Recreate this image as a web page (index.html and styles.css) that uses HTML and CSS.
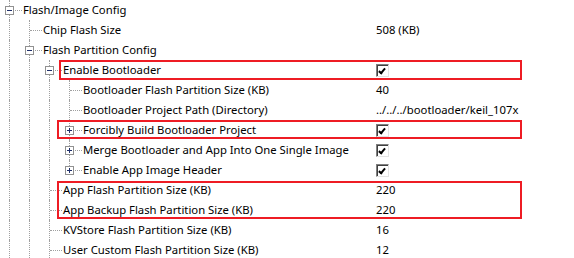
FILE: index.html
```html
<!DOCTYPE html>
<html lang="en">
<head>
  <meta charset="UTF-8">
  <title>Configuration Wizard</title>
  <link rel="stylesheet" href="styles.css">
</head>
<body>
  <div class="wizard">
    <div class="row">
      <div class="tree"><span class="node full"><i class="box minus"></i></span><span class="label">Flash/Image Config</span></div>
      <div class="value"></div>
    </div>
    <div class="row">
      <div class="tree"><span class="g v"></span><span class="node full leaf"></span><span class="label">Chip Flash Size</span></div>
      <div class="value">508 (KB)</div>
    </div>
    <div class="row">
      <div class="tree"><span class="g v"></span><span class="node full"><i class="box minus"></i></span><span class="label">Flash Partition Config</span></div>
      <div class="value"></div>
    </div>
    <div class="row">
      <div class="tree"><span class="g v"></span><span class="g v"></span><span class="node full"><i class="box minus"></i></span><span class="label">Enable Bootloader</span></div>
      <div class="value"><span class="check"></span></div>
    </div>
    <div class="row">
      <div class="tree"><span class="g v"></span><span class="g v"></span><span class="g v"></span><span class="node full leaf"></span><span class="label">Bootloader Flash Partition Size (KB)</span></div>
      <div class="value">40</div>
    </div>
    <div class="row">
      <div class="tree"><span class="g v"></span><span class="g v"></span><span class="g v"></span><span class="node full leaf"></span><span class="label">Bootloader Project Path (Directory)</span></div>
      <div class="value">../../../bootloader/keil_107x</div>
    </div>
    <div class="row">
      <div class="tree"><span class="g v"></span><span class="g v"></span><span class="g v"></span><span class="node full"><i class="box plus"></i></span><span class="label">Forcibly Build Bootloader Project</span></div>
      <div class="value"><span class="check"></span></div>
    </div>
    <div class="row">
      <div class="tree"><span class="g v"></span><span class="g v"></span><span class="g v"></span><span class="node full"><i class="box plus"></i></span><span class="label">Merge Bootloader and App Into One Single Image</span></div>
      <div class="value"><span class="check"></span></div>
    </div>
    <div class="row">
      <div class="tree"><span class="g v"></span><span class="g v"></span><span class="g v"></span><span class="node last"><i class="box plus"></i></span><span class="label">Enable App Image Header</span></div>
      <div class="value"><span class="check"></span></div>
    </div>
    <div class="row">
      <div class="tree"><span class="g v"></span><span class="g v"></span><span class="node full leaf"></span><span class="label">App Flash Partition Size (KB)</span></div>
      <div class="value">220</div>
    </div>
    <div class="row">
      <div class="tree"><span class="g v"></span><span class="g v"></span><span class="node full leaf"></span><span class="label">App Backup Flash Partition Size (KB)</span></div>
      <div class="value">220</div>
    </div>
    <div class="row">
      <div class="tree"><span class="g v"></span><span class="g v"></span><span class="node full leaf"></span><span class="label">KVStore Flash Partition Size (KB)</span></div>
      <div class="value">16</div>
    </div>
    <div class="row">
      <div class="tree"><span class="g v"></span><span class="g v"></span><span class="node full leaf"></span><span class="label">User Custom Flash Partition Size (KB)</span></div>
      <div class="value">12</div>
    </div>

    <!-- highlight marks drawn over the tree -->
    <div class="mark mark-boot"></div>
    <div class="mark mark-force"></div>
    <div class="mark mark-app"></div>
  </div>
</body>
</html>
```

FILE: styles.css
```css
body {
  margin: 0;
  background-color: #fff;
  font-family: "Noto Sans", sans-serif;
  font-size: 11.3px;
  color: #000;
}

.wizard {
  position: relative;
  width: 574px;
  height: 258px;
  overflow: hidden;
}

.row {
  display: flex;
  height: 20px;
  line-height: 20px;
}

.tree {
  display: flex;
  width: 376px;
  flex-shrink: 0;
  white-space: nowrap;
}

.value {
  display: flex;
  align-items: center;
  white-space: nowrap;
}

/* tree guide lines */
.g,
.node {
  position: relative;
  width: 20px;
  height: 20px;
  flex-shrink: 0;
}

.g.v::before,
.node.full::before,
.node.last::before {
  content: "";
  position: absolute;
  left: 9px;
  top: 0;
  height: 20px;
  border-left: 1px dotted #a0a0a0;
}

.node.last::before {
  height: 10px;
}

.node::after {
  content: "";
  position: absolute;
  left: 10px;
  top: 10px;
  width: 12px;
  border-top: 1px dotted #a0a0a0;
}

.box {
  position: absolute;
  left: 5px;
  top: 6px;
  width: 7px;
  height: 7px;
  border: 1px solid #919191;
  background-color: #fff;
  z-index: 1;
}

.box::before {
  content: "";
  position: absolute;
  left: 1px;
  top: 3px;
  width: 5px;
  height: 1px;
  background-color: #1f2f6a;
}

.box.plus::after {
  content: "";
  position: absolute;
  left: 3px;
  top: 1px;
  width: 1px;
  height: 5px;
  background-color: #1f2f6a;
}

.label {
  padding-left: 3px;
}

/* checkbox */
.check {
  position: relative;
  width: 11px;
  height: 11px;
  border: 1px solid;
  border-color: #808080 #e3e3e3 #e3e3e3 #808080;
  box-shadow: inset 1px 1px 0 #404040;
  background-color: #fff;
}

.check::after {
  content: "";
  position: absolute;
  left: 3px;
  top: 2px;
  width: 2px;
  height: 5px;
  border: solid #000;
  border-width: 0 2px 2px 0;
  transform: rotate(40deg);
}

/* red annotation rectangles */
.mark {
  position: absolute;
  border: 2px solid #ee1c24;
}

.mark-boot {
  left: 59px;
  top: 60px;
  width: 459px;
  height: 16px;
}

.mark-force {
  left: 57px;
  top: 120px;
  width: 461px;
  height: 15px;
}

.mark-app {
  left: 57px;
  top: 181px;
  width: 461px;
  height: 34px;
}
```
